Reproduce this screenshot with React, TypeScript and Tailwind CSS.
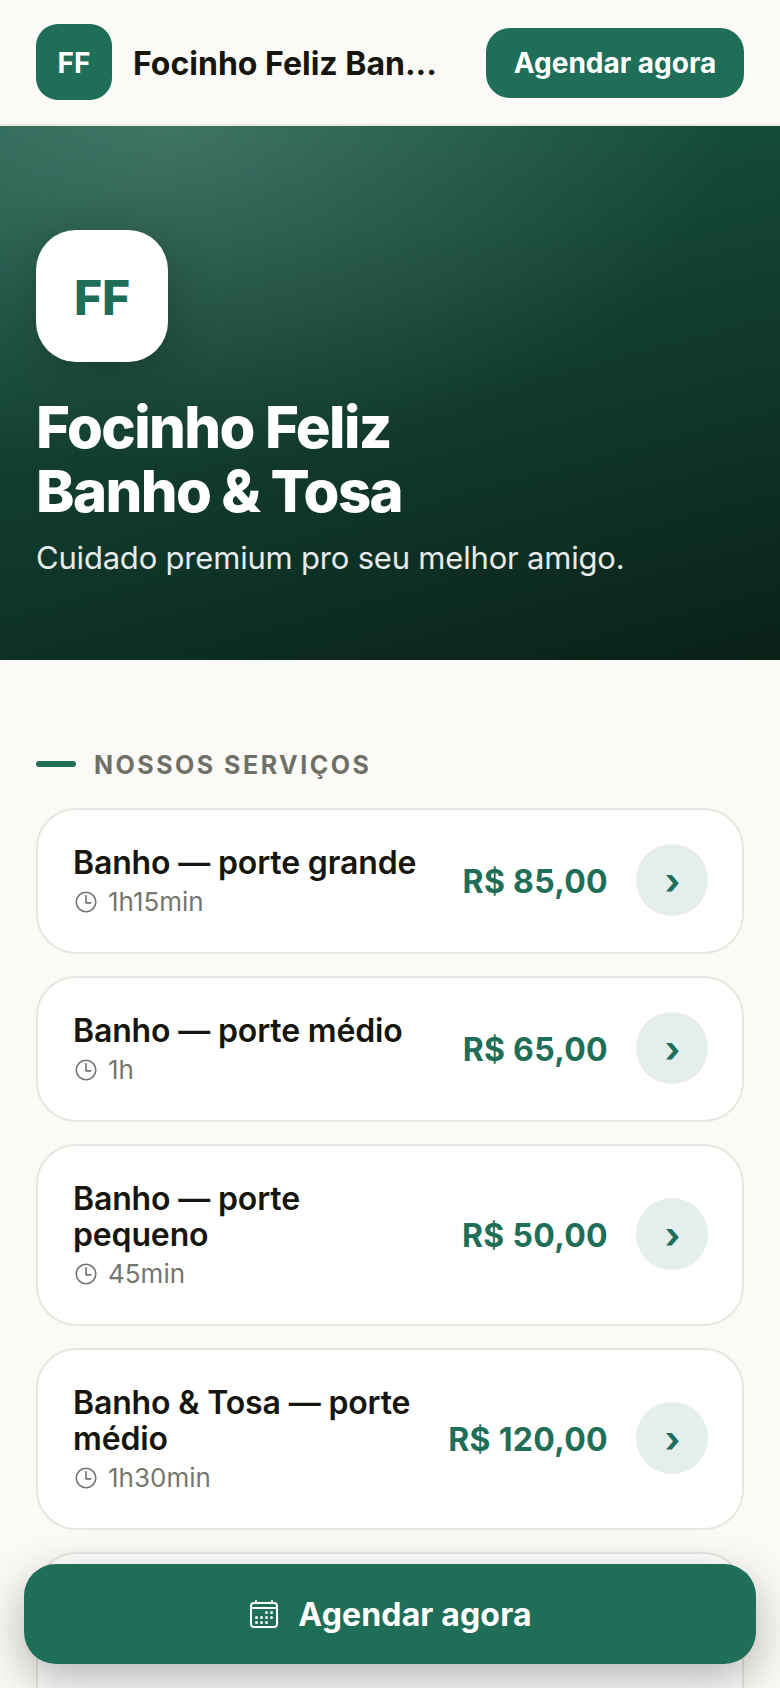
import { IoCalendarOutline, IoTimeOutline } from "react-icons/io5"

const services = [
  { name: "Banho — porte grande", duration: "1h15min", price: "R$ 85,00" },
  { name: "Banho — porte médio", duration: "1h", price: "R$ 65,00" },
  { name: "Banho — porte pequeno", duration: "45min", price: "R$ 50,00" },
  { name: "Banho & Tosa — porte médio", duration: "1h30min", price: "R$ 120,00" },
]

function ServiceCard({ name, duration, price }: { name: string; duration: string; price: string }) {
  return (
    <div className="flex items-center justify-between rounded-[40px] border-2 border-[#e9e6df] bg-white pt-[34px] pb-[32px] pl-[35px] pr-[34px]">
      <div className="flex-1 min-w-0 pt-[1px]">
        <div className="text-[32px] leading-[36px] font-semibold text-[#16160f] tracking-[-0.15px]">{name}</div>
        <div className="mt-[3px] flex items-center gap-[9px] text-[26px] leading-[36px] text-[#75766e]">
          <IoTimeOutline className="w-[26px] h-[26px]" />
          <span>{duration}</span>
        </div>
      </div>
      <div className="mb-[1px] ml-[33px] text-[32px] font-bold tracking-[0.3px] text-[#1f6e58] whitespace-nowrap">{price}</div>
      <div className="mb-[4px] ml-[28px] flex h-[72px] w-[72px] shrink-0 items-center justify-center rounded-full bg-[#e4eeea] pl-[1px] pt-[2px] text-[36px] font-bold leading-none text-[#1f6e58]">
        ›
      </div>
    </div>
  )
}

export default function App() {
  return (
    <div className="relative h-[1688px] w-[780px] overflow-hidden bg-[#fbfaf6] font-['Inter',sans-serif]">
      {/* Header */}
      <header className="flex h-[126px] items-center justify-between border-b-2 border-[#ece9e2] pl-[36px] pr-[36px]">
        <div className="flex items-center gap-[21px]">
          <div className="flex h-[76px] w-[76px] items-center justify-center rounded-[22px] bg-[#1f6e58] pt-[2px] text-[28px] font-bold text-white">
            FF
          </div>
          <div className="mt-[3px] whitespace-nowrap text-[32px] font-bold text-[#16160f]">Focinho Feliz Ban...</div>
        </div>
        <button className="mt-[2px] flex h-[70px] w-[258px] items-center justify-center rounded-[24px] bg-[#1f6e58] text-[28px] font-bold text-white">
          Agendar agora
        </button>
      </header>

      {/* Hero */}
      <section className="h-[534px] bg-[radial-gradient(ellipse_560px_340px_at_170px_0px,rgba(255,255,255,0.17),rgba(255,255,255,0)),linear-gradient(165deg,#1a5c49_0%,#123f31_45%,#0a2118_100%)] pl-[36px] pt-[104px]">
        <div className="flex h-[132px] w-[132px] items-center justify-center rounded-[40px] bg-white pt-[4px] text-[48px] font-extrabold text-[#1f6e58] shadow-[0_12px_48px_rgba(0,0,0,0.2)]">
          FF
        </div>
        <h1 className="mt-[33px] text-[58px] leading-[64px] font-extrabold tracking-[-1.6px] text-white">
          Focinho Feliz
          <br />
          Banho &amp; Tosa
        </h1>
        <p className="mt-[11px] text-[31px] leading-[48px] tracking-[-0.2px] text-white/90">
          Cuidado premium pro seu melhor amigo.
        </p>
      </section>

      {/* Services */}
      <section className="pl-[36px] pr-[36px] pt-[89px]">
        <div className="mb-[27px] flex items-center gap-[18px]">
          <div className="mb-[2px] h-[6px] w-[40px] rounded-full bg-[#1f6e58]" />
          <h2 className="text-[25px] leading-[32px] font-bold tracking-[2.5px] text-[#6f7068]">NOSSOS SERVIÇOS</h2>
        </div>
        <div className="flex flex-col gap-[22px]">
          {services.map((s) => (
            <ServiceCard key={s.name} {...s} />
          ))}
          <div className="h-[180px] rounded-[40px] border-2 border-[#e9e6df] bg-white" />
        </div>
      </section>

      {/* Floating CTA */}
      <button className="absolute bottom-[24px] left-[24px] right-[24px] flex h-[100px] items-center justify-center gap-[18px] rounded-[32px] bg-[#1f6e58] text-[32px] font-bold tracking-[0.15px] text-white shadow-[0_16px_48px_rgba(0,0,0,0.3)]">
        <IoCalendarOutline className="h-[32px] w-[32px]" />
        <span className="mt-[2px]">Agendar agora</span>
      </button>
    </div>
  )
}
